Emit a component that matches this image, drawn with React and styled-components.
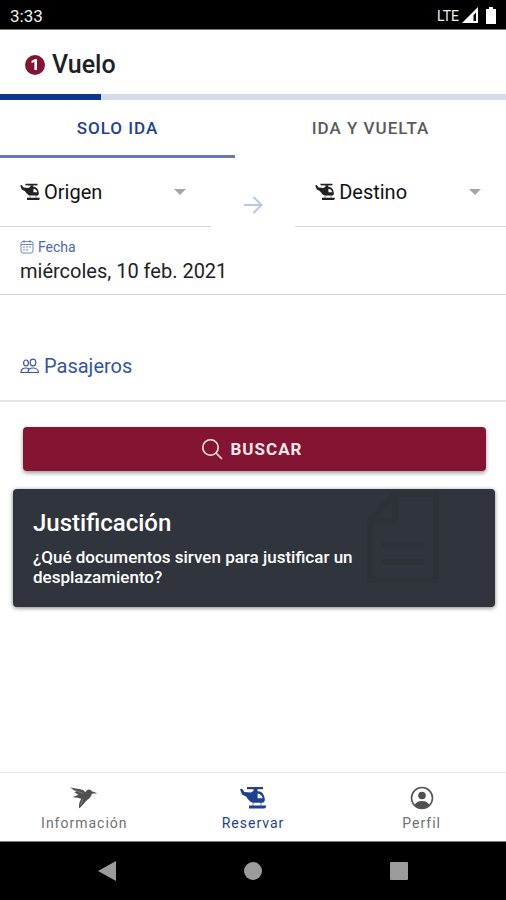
import { useState } from "react";
import styled, { createGlobalStyle } from "styled-components";

const blue = "#1f3f91";
const wine = "#831533";

const GlobalStyle = createGlobalStyle`
  * {
    box-sizing: border-box;
  }
  body {
    margin: 0;
    background: #fff;
    color: #202124;
    font-family: Roboto, "Liberation Sans", sans-serif;
  }
  button, input, select {
    font-family: inherit;
  }
`;

const Screen = styled.div`
  min-height: 100vh;
  display: flex;
  flex-direction: column;
`;

const StatusBar = styled.div`
  height: 30px;
  padding: 2px 8px 0 10px;
  display: flex;
  align-items: center;
  justify-content: space-between;
  background: #000;
  border-bottom: 1px solid #777;
  color: #f1f1f1;
  font-size: 17px;
`;

const StatusIcons = styled.div`
  display: flex;
  align-items: center;
  gap: 3px;
  font-size: 14px;
`;

const Header = styled.header`
  height: 64px;
  padding: 6px 24px 0;
  display: flex;
  align-items: center;
  gap: 6px;
`;

const Title = styled.h1`
  margin: 0;
  font-size: 25px;
  line-height: 28px;
  font-weight: 500;
`;

const Progress = styled.div`
  height: 6px;
  background: #d5dde8;
`;

const ProgressFill = styled.div`
  height: 6px;
  background: #0b358e;
`;

const Tabs = styled.div`
  display: flex;
`;

const Tab = styled.button`
  flex: 1 1 auto;
  height: 58px;
  padding: 0 16px;
  border: 0;
  border-bottom: 3px solid ${(p) => (p.$active ? "#6778b5" : "transparent")};
  background: none;
  color: ${(p) => (p.$active ? blue : "#5a5a5a")};
  font-size: 17px;
  font-weight: 500;
  letter-spacing: 1px;
  text-transform: uppercase;
`;

const Route = styled.div`
  display: grid;
  grid-template-columns: 5fr 2fr 5fr;
`;

const Place = styled.label`
  height: 69px;
  padding: 0 24px 0 20px;
  display: flex;
  align-items: center;
  gap: 4px;
  border-bottom: 1px solid #d4d4d4;
`;

const Select = styled.select`
  flex: 1;
  min-width: 0;
  padding: 0;
  border: 0;
  appearance: none;
  background: none;
  color: #111;
  font-size: 20px;
`;

const ArrowCell = styled.div`
  padding-top: 24px;
  display: flex;
  align-items: center;
  justify-content: center;
`;

const DateItem = styled.div`
  height: 68px;
  padding: 11px 20px 0;
  border-bottom: 1px solid #d4d4d4;
`;

const DateLabel = styled.label`
  display: flex;
  align-items: center;
  gap: 4px;
  color: #4b68a9;
  font-size: 14px;
  line-height: 18px;
`;

const DateInput = styled.input`
  width: 100%;
  height: 30px;
  padding: 0;
  border: 0;
  background: none;
  color: #222;
  font-size: 20px;
`;

const Passengers = styled.button`
  height: 107px;
  padding: 36px 20px 0;
  display: flex;
  align-items: center;
  gap: 4px;
  border: 0;
  border-bottom: 2px solid #e6e6e6;
  background: none;
  color: #35559f;
  font-size: 20px;
`;

const SearchButton = styled.button`
  height: 44px;
  margin: 25px 20px 0 23px;
  padding: 0 12px 0 6px;
  display: flex;
  align-items: center;
  justify-content: center;
  gap: 8px;
  border: 0;
  border-radius: 4px;
  background: ${wine};
  box-shadow: 0 2px 4px rgba(0, 0, 0, 0.4);
  color: #f7e6eb;
  font-size: 17px;
  font-weight: 700;
  letter-spacing: 1px;
  text-transform: uppercase;
`;

const Card = styled.section`
  position: relative;
  min-height: 118px;
  margin: 18px 11px 0 13px;
  padding: 20px;
  overflow: hidden;
  border-radius: 4px;
  background: #30343c;
  box-shadow: 0 1px 4px rgba(0, 0, 0, 0.5);
  color: #fff;
`;

const CardTitle = styled.h2`
  margin: 0 0 10px;
  font-size: 24px;
  line-height: 28px;
  font-weight: 500;
`;

const CardText = styled.p`
  margin: 0;
  max-width: 350px;
  font-size: 17px;
  line-height: 20px;
  font-weight: 500;
`;

const CardArt = styled.svg`
  position: absolute;
  top: 2px;
  right: 56px;
`;

const TabBar = styled.nav`
  height: 69px;
  margin-top: auto;
  display: grid;
  grid-template-columns: repeat(3, 1fr);
  border-top: 1px solid #ececec;
`;

const TabLink = styled.a`
  padding-top: 13px;
  display: flex;
  flex-direction: column;
  align-items: center;
  gap: 3px;
  color: ${(p) => (p.$active ? blue : "#707070")};
  font-size: 14px;
  line-height: 20px;
  letter-spacing: 1px;
  text-decoration: none;
`;

const SystemBar = styled.div`
  height: 59px;
  display: flex;
  align-items: center;
  justify-content: center;
  gap: 126px;
  background: #000;
  border-top: 1px solid #777;
`;

const SystemButton = styled.button`
  padding: 0;
  display: flex;
  border: 0;
  background: none;
`;

const Helicopter = ({ width = 20, height = 18 }) => (
  <svg width={width} height={height} viewBox="0 0 26 24" fill="currentColor">
    <path d="M7 1h16v2.200H7z" />
    <path d="M13.500 3h4v3h-4z" />
    <path d="M0 3.200l2-.4 2.500 3.200 6.500.6c.8-.9 1.800-1.400 3-1.400h4c4 0 6.500 3.500 6.800 8.300.1 2-.8 3.300-2.800 3.300h-8c-2.500 0-4-1-5.500-3L6 10.500 2 8.500z" />
    <path d="M17.600 7.600v4.600h5c-.7-2.600-2.300-4.300-5-4.600z" fill="#fff" />
    <path d="M12 16h2v4h-2zM20 16h2v4h-2z" opacity="0.3" />
    <path d="M9 19.500h17v1c0 1.300-.7 2-2 2H9z" />
  </svg>
);

const Caret = () => (
  <svg width="14" height="6" viewBox="0 0 14 6">
    <path d="M1 0h12L7 6z" fill="#a5a5a5" />
  </svg>
);

const Hummingbird = () => (
  <svg width="28" height="24" viewBox="0 0 28 24" fill="#505050">
    <path d="M0 1.500l10.500 1.700c2 .4 3.800 1.500 5 3C16 4.500 17.300 3.400 19 3.400c1.300 0 2.300.7 2.800 1.900l5.700 1.900-5.700.6c-.3 2.200-1.800 4.400-4.300 6-2.200 1.500-3.500 4.700-8.300 8.700-.6-3 0-6.500 2-9.700L7.500 11.800l-5-.8 6-2.300-4.300-2.500 2.300-.3z" />
    <path d="M5 4.300l8.500 3.200M10.500 19l2.500-6" stroke="#999" strokeWidth="0.600" />
  </svg>
);

function App() {
  const [trip, setTrip] = useState("ida");

  return (
    <Screen>
      <GlobalStyle />
      <StatusBar>
        <span>3:33</span>
        <StatusIcons>
          <span>LTE</span>
          <svg width="17" height="17" viewBox="0 0 17 17">
            <path d="M0 16 16 0v16z" fill="#fff" />
            <path d="M11.500 8 14 5.500V14h-2.500z" fill="#000" />
          </svg>
          <svg width="16" height="18" viewBox="0 0 16 18">
            <path d="M7 0h4v2h3v15H4V2h3z" fill="#fff" />
          </svg>
        </StatusIcons>
      </StatusBar>

      <Header>
        <svg width="22" height="22" viewBox="0 0 22 22">
          <circle cx="11" cy="11" r="10" fill={wine} />
          <path d="M7.500 7 11 5h2v11h-2.600V8L7.500 9z" fill="#fff" />
        </svg>
        <Title>Vuelo</Title>
      </Header>
      <Progress role="progressbar" aria-label="Progreso" aria-valuenow={20}>
        <ProgressFill style={{ width: "20%" }} />
      </Progress>

      <Tabs>
        <Tab $active={trip === "ida"} onClick={() => setTrip("ida")}>Solo ida</Tab>
        <Tab $active={trip === "vuelta"} onClick={() => setTrip("vuelta")}>Ida y vuelta</Tab>
      </Tabs>

      <Route>
        <Place>
          <Helicopter />
          <Select aria-label="Origen">
            <option>Origen</option>
          </Select>
          <Caret />
        </Place>
        <ArrowCell>
          <svg width="20" height="20" viewBox="0 0 20 20" fill="none" stroke="#b9c6e4" strokeWidth="2">
            <path d="M1 10h17M10.500 2l8 8-8 8" />
          </svg>
        </ArrowCell>
        <Place>
          <Helicopter />
          <Select aria-label="Destino">
            <option>Destino</option>
          </Select>
          <Caret />
        </Place>
      </Route>

      <DateItem>
        <DateLabel htmlFor="fecha">
          <svg width="14" height="14" viewBox="0 0 14 14" fill="none" stroke="#7186bd">
            <rect x="1" y="1.500" width="12" height="11.500" rx="2" />
            <path d="M1 4.500h12M4 0v3M10 0v3M3 7h2M6 7h2M9 7h2M3 10h2M6 10h2" />
          </svg>
          Fecha
        </DateLabel>
        <DateInput id="fecha" readOnly value="miércoles, 10 feb. 2021" />
      </DateItem>

      <Passengers>
        <svg width="20" height="18" viewBox="0 0 20 18" fill="none" stroke="currentColor" strokeWidth="1.200">
          <ellipse cx="6" cy="6" rx="2.400" ry="3" />
          <ellipse cx="13" cy="5.500" rx="2.800" ry="3.300" />
          <path d="M8 15.500c0-3 2.400-4.500 5-4.500s5.500 1.500 5.500 4.500zM7.500 15.500H1c0-3 2-4.500 5-4.500 1 0 2 .2 2.800.8" />
        </svg>
        Pasajeros
      </Passengers>

      <SearchButton>
        <svg width="22" height="22" viewBox="0 0 22 22" fill="none" stroke="currentColor" strokeWidth="1.600">
          <circle cx="9.500" cy="9.500" r="7.700" />
          <path d="M15 15l6 6" />
        </svg>
        Buscar
      </SearchButton>

      <Card>
        <CardArt width="72" height="92" viewBox="0 0 72 92" fill="none" stroke="#2d3138" strokeWidth="6">
          <path d="M28 3h41v86H3V30zM28 3v27H3M15 54h42M15 71h42" />
        </CardArt>
        <CardTitle>Justificación</CardTitle>
        <CardText>¿Qué documentos sirven para justificar un desplazamiento?</CardText>
      </Card>

      <TabBar>
        <TabLink href="#informacion">
          <Hummingbird />
          Información
        </TabLink>
        <TabLink href="#reservar" $active>
          <Helicopter width={26} height={24} />
          Reservar
        </TabLink>
        <TabLink href="#perfil">
          <svg width="24" height="24" viewBox="0 0 24 24">
            <circle cx="12" cy="12" r="10.500" fill="none" stroke="#555" strokeWidth="1.600" />
            <circle cx="12" cy="9.500" r="3.800" fill="#505050" />
            <path d="M4.800 18.500c1.600-2.500 4-3.500 7.200-3.500s5.600 1 7.200 3.500C17.500 21 15 22.300 12 22.300S6.500 21 4.800 18.500z" fill="#505050" />
          </svg>
          Perfil
        </TabLink>
      </TabBar>

      <SystemBar>
        <SystemButton aria-label="Atrás">
          <svg width="20" height="22" viewBox="0 0 20 22">
            <path d="M1 11 19 1v20z" fill="#9b9b9b" />
          </svg>
        </SystemButton>
        <SystemButton aria-label="Inicio">
          <svg width="20" height="20" viewBox="0 0 20 20">
            <circle cx="10" cy="10" r="9" fill="#9b9b9b" />
          </svg>
        </SystemButton>
        <SystemButton aria-label="Recientes">
          <svg width="20" height="20" viewBox="0 0 20 20">
            <rect x="1" y="1" width="18" height="18" rx="1" fill="#9b9b9b" />
          </svg>
        </SystemButton>
      </SystemBar>
    </Screen>
  );
}

export default App;
